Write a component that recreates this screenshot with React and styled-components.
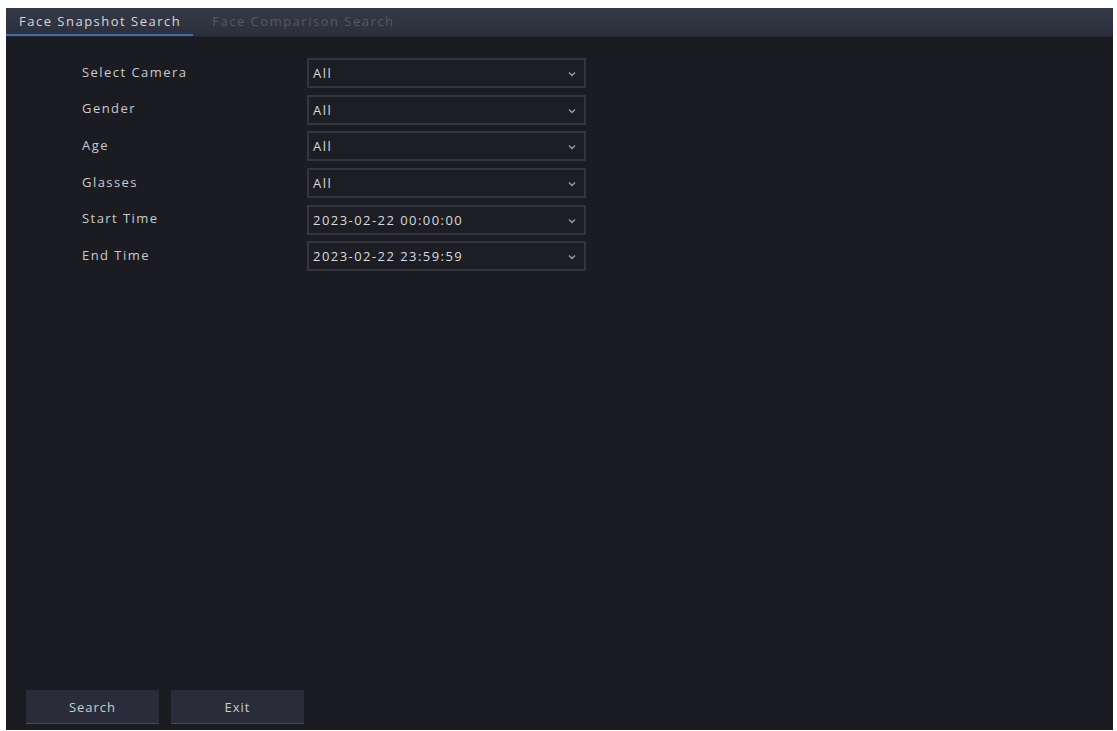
import React from 'react'
import styled, { createGlobalStyle } from 'styled-components'

const GlobalStyle = createGlobalStyle`
  html, body {
    margin: 0;
    padding: 0;
    background: #ffffff;
  }
  body {
    font-family: "Open Sans", "DejaVu Sans", sans-serif;
  }
`

const Page = styled.div`
  width: 1117px;
  height: 731px;
  padding: 8px 4px 1px 6px;
  box-sizing: border-box;
`

const Window = styled.div`
  height: 100%;
  display: flex;
  flex-direction: column;
  background: #1a1c21;
`

const TabBar = styled.div`
  display: flex;
  gap: 6px;
  height: 28px;
  background: linear-gradient(#353947, #2c2f3b);
  border-bottom: 1px solid #22252d;
`

const Tab = styled.div`
  padding: 0 12px 0 13px;
  display: flex;
  align-items: center;
  font-size: 13px;
  letter-spacing: 1.5px;
  color: ${({ active }) => (active ? '#d6d8de' : '#555968')};
  border-bottom: 2px solid ${({ active }) => (active ? '#3b6fb0' : 'transparent')};
`

const Body = styled.div`
  flex: 1;
  display: flex;
  flex-direction: column;
  justify-content: space-between;
  padding: 21px 20px 6px 20px;
`

const Form = styled.div`
  display: grid;
  grid-template-columns: 225px 279px;
  grid-auto-rows: 30px;
  row-gap: 6.7px;
  padding-left: 56px;
`

const Label = styled.div`
  display: flex;
  align-items: center;
  padding-bottom: 3px;
  font-size: 13px;
  color: #c9cbd0;
  letter-spacing: 1.45px;
`

const Select = styled.div`
  display: flex;
  align-items: center;
  justify-content: space-between;
  padding: 0 8px 0 4px;
  border: 2px solid #33363e;
  background: #1c1e23;
  font-size: 13px;
  color: #d8dadf;
  letter-spacing: 1.45px;
`

const Chevron = styled.svg`
  width: 8px;
  height: 6px;
  margin-top: 2px;
`

const Actions = styled.div`
  display: flex;
  gap: 12px;
`

const Button = styled.div`
  width: 133px;
  height: 34px;
  display: flex;
  align-items: center;
  justify-content: center;
  background: #2a2d39;
  border-bottom: 1px solid #494d5a;
  box-sizing: border-box;
  font-size: 13px;
  color: #c9cbd0;
  letter-spacing: 1px;
`

const fields = [
  ['Select Camera', 'All'],
  ['Gender', 'All'],
  ['Age', 'All'],
  ['Glasses', 'All'],
  ['Start Time', '2023-02-22 00:00:00'],
  ['End Time', '2023-02-22 23:59:59'],
]

const App = () => (
  <Page>
    <GlobalStyle />
    <Window>
      <TabBar>
        <Tab active>Face Snapshot Search</Tab>
        <Tab>Face Comparison Search</Tab>
      </TabBar>
      <Body>
        <Form>
          {fields.map(([label, value]) => (
            <React.Fragment key={label}>
              <Label>{label}</Label>
              <Select>
                <span>{value}</span>
                <Chevron viewBox="0 0 8 6">
                  <path d="M1 1.5 L4 4.5 L7 1.5" fill="none" stroke="#9a9ea8" strokeWidth="1.4" />
                </Chevron>
              </Select>
            </React.Fragment>
          ))}
        </Form>
        <Actions>
          <Button>Search</Button>
          <Button>Exit</Button>
        </Actions>
      </Body>
    </Window>
  </Page>
)

export default App
